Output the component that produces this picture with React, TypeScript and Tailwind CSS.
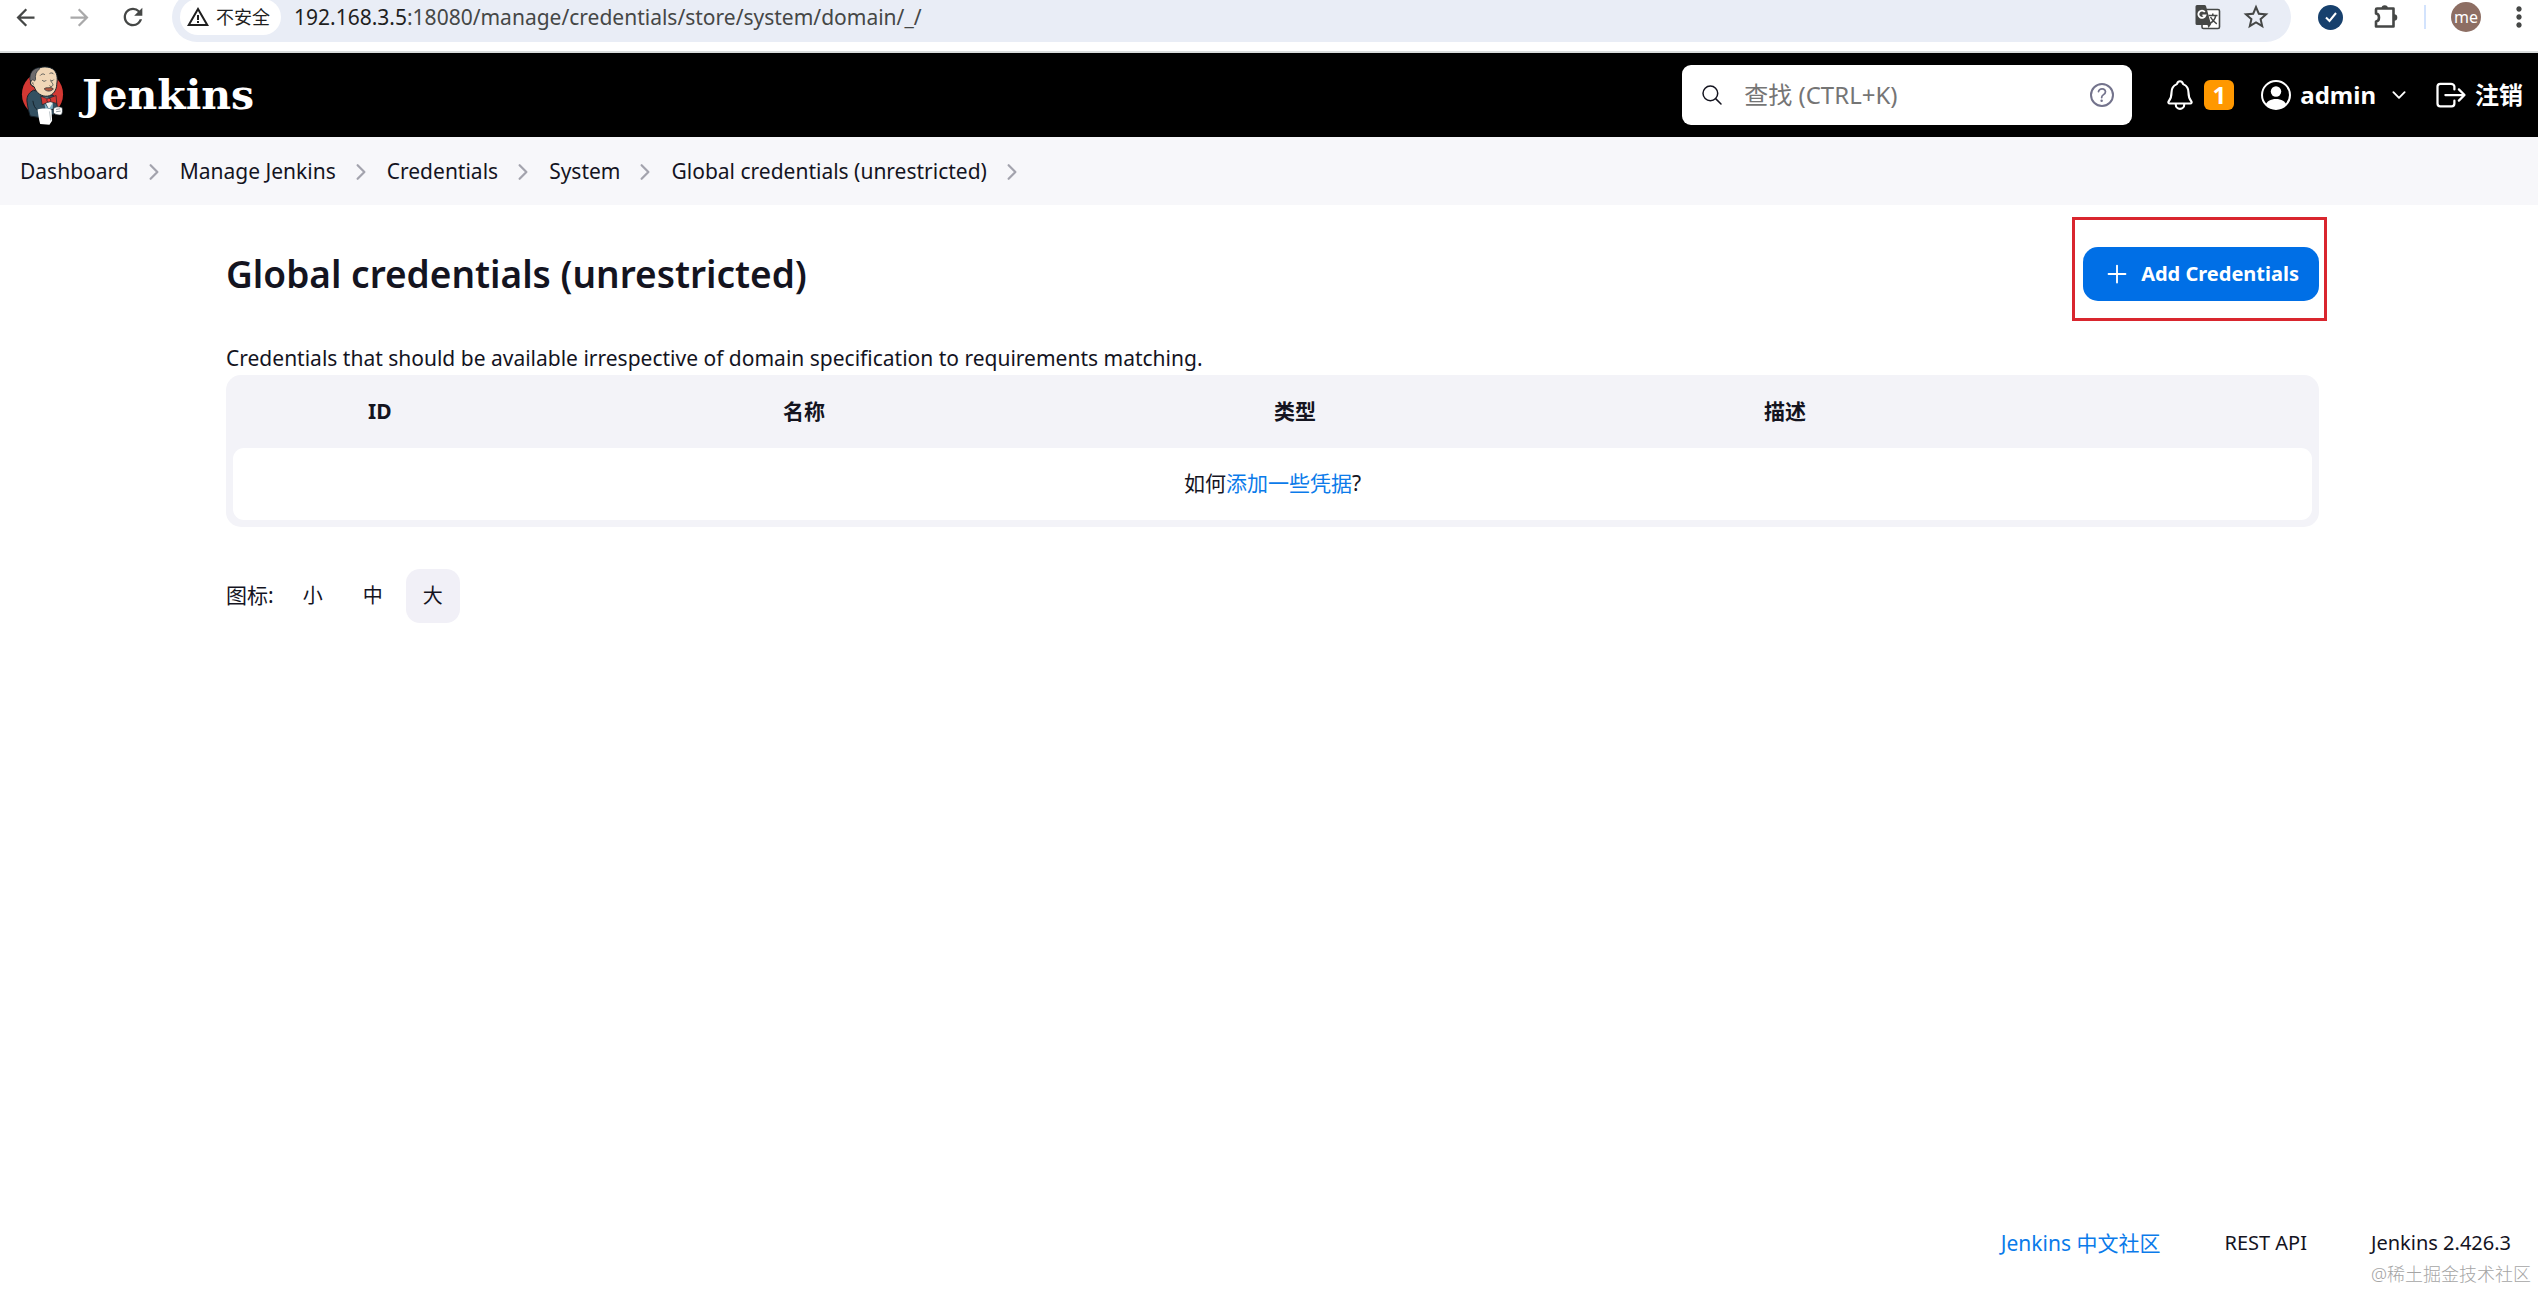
import { useState } from 'react';
import {
  IoAdd,
  IoChevronDown,
  IoChevronForward,
  IoHelpCircleOutline,
  IoLogOutOutline,
  IoNotificationsOutline,
  IoSearchOutline,
} from 'react-icons/io5';
import {
  MdArrowBack,
  MdArrowForward,
  MdMoreVert,
  MdRefresh,
  MdStarBorder,
  MdWarningAmber,
} from 'react-icons/md';

const breadcrumbs = [
  'Dashboard',
  'Manage Jenkins',
  'Credentials',
  'System',
  'Global credentials (unrestricted)',
];

const columns = [
  { label: '', width: 'w-[111px]' },
  { label: 'ID', width: 'w-[415px]' },
  { label: '名称', width: 'w-[491px]' },
  { label: '类型', width: 'w-[490px]' },
  { label: '描述', width: '' },
];

const iconSizes = ['小', '中', '大'];

function JenkinsLogo() {
  return (
    <svg className="w-[45px] h-[61px]" viewBox="60 192 134 184" aria-hidden="true">
      <ellipse cx="127" cy="280" rx="62" ry="66" fill="#d33833" />
      {/* jacket */}
      <path
        d="M100 268 C86 276 80 284 80 300 C82 318 86 334 90 346 L116 350 L162 340 L172 320 C170 304 166 294 160 284 Z"
        fill="#335061"
        stroke="#16222b"
        strokeWidth="3"
      />
      <path d="M98 300 C100 314 104 322 112 328 L160 326" fill="none" stroke="#16222b" strokeWidth="3" />
      {/* shirt */}
      <path d="M128 290 L160 292 L156 318 L146 324 Z" fill="#f0f0ee" />
      <path d="M132 304 L146 326 L158 306 L158 324 L136 326 Z" fill="#81b0c4" />
      {/* head */}
      <path
        d="M100 214 C110 198 140 192 158 204 C172 214 173 232 170 250 C170 266 160 284 142 286 C124 288 108 276 102 258 C92 254 88 246 92 238 Z"
        fill="#f0d6b7"
        stroke="#16222b"
        strokeWidth="3"
      />
      {/* hair */}
      <path
        d="M116 200 C98 202 88 216 89 236 C90 242 94 240 98 236 C102 240 104 242 106 236 C104 222 108 212 118 204 Z"
        fill="#6d6b6d"
        stroke="#16222b"
        strokeWidth="2"
      />
      <path d="M94 240 C88 246 92 258 102 256 M98 244 C96 248 98 250 101 250" fill="none" stroke="#16222b" strokeWidth="2" />
      {/* face */}
      <path
        d="M120 224 C124 218 130 218 134 221 M148 218 C154 214 158 216 161 220 M126 238 C130 242 136 242 138 238 M150 237 C154 241 159 240 161 236 M152 240 C156 248 162 250 156 256 C152 258 150 256 148 254"
        fill="none"
        stroke="#16222b"
        strokeWidth="2"
      />
      <path d="M132 264 C138 258 146 262 150 260 C154 260 158 262 160 264 C154 272 140 274 132 264 Z" fill="#b0563f" stroke="#16222b" strokeWidth="2" />
      {/* bow tie */}
      <path d="M122 286 L142 294 L168 284 L170 308 L148 302 L126 312 Z" fill="#d33833" stroke="#16222b" strokeWidth="2" />
      <circle cx="146" cy="298" r="6" fill="#ef3d3a" stroke="#16222b" strokeWidth="2" />
      {/* towel and glove */}
      <path d="M112 326 C124 322 142 322 154 326 L156 360 L148 372 L120 370 C116 356 114 340 112 326 Z" fill="#ffffff" />
      <path d="M148 332 L152 360" stroke="#9aa5ab" strokeWidth="2" />
      <path d="M160 324 C166 316 178 318 186 320 C188 328 188 336 184 342 C176 344 164 342 160 336 Z" fill="#ffffff" stroke="#16222b" strokeWidth="2" />
      <path d="M168 326 L180 324 M168 333 L182 331" stroke="#5a6b75" strokeWidth="2" />
    </svg>
  );
}

function UserIcon() {
  return (
    <svg className="w-[30px] h-[30px]" viewBox="0 0 30 30" aria-hidden="true">
      <defs>
        <clipPath id="user-ring">
          <circle cx="15" cy="15" r="14" />
        </clipPath>
      </defs>
      <circle cx="15" cy="15" r="14" fill="none" stroke="currentColor" strokeWidth="2" />
      <circle cx="15" cy="11.5" r="5.2" fill="currentColor" />
      <path d="M4 27 C5 21 10 19 15 19 C20 19 25 21 26 27 L26 30 L4 30 Z" fill="currentColor" clipPath="url(#user-ring)" />
    </svg>
  );
}

function TranslateIcon() {
  return (
    <svg className="w-[26px] h-[26px]" viewBox="0 0 26 26" aria-hidden="true">
      <rect x="7" y="5.5" width="17.5" height="19" rx="1.5" fill="#ffffff" stroke="currentColor" strokeWidth="1.6" />
      <path d="M2 1 H9.5 Q10.5 1 11 2 L16 20.5 L13.5 24 L12.5 21 H2 Q0.5 21 0.5 19.5 V2.5 Q0.5 1 2 1 Z" fill="currentColor" />
      {/* round arrow-like mark on the dark page */}
      <path d="M9.8 8 A3.6 3.6 0 1 0 10.4 11.4 H7.4" fill="none" stroke="#ffffff" strokeWidth="1.9" />
      <path d="M13.5 11.5 H22.5 M17.8 9.5 V11.5 M20.8 11.5 C20 15.5 17.5 18 15 19.5 M15.5 13 C17 16 19 18 21.8 19.8" fill="none" stroke="currentColor" strokeWidth="1.5" />
    </svg>
  );
}

function ExtensionIcon() {
  return (
    <svg className="w-[26px] h-[26px]" viewBox="0 0 26 26" aria-hidden="true">
      <path
        d="M4 4.5 H20.5 V22.5 H3 V17.5 C7 17 7 10 3 9.5 V5.5 Q3 4.5 4 4.5 Z"
        fill="none"
        stroke="currentColor"
        strokeWidth="2.6"
        strokeLinejoin="round"
      />
      <path d="M8.5 4.5 a3.2 3.2 0 0 1 6.4 0 Z M21 10.2 a3.3 3.3 0 0 1 0 6.6 Z" fill="currentColor" />
    </svg>
  );
}

function BrowserBar() {
  return (
    <div className="h-[53px] shrink-0 overflow-hidden border-b-2 border-[#dadddd] bg-white text-[#454746]">
      <div className="-mt-2 flex h-[50px] items-center pl-3 pr-[3px]">
        <button aria-label="Back">
          <MdArrowBack className="h-[27px] w-[27px]" />
        </button>
        <button aria-label="Forward" className="ml-[27px] text-[#a9a9aa]">
          <MdArrowForward className="h-[27px] w-[27px]" />
        </button>
        <button aria-label="Reload" className="ml-[26px]">
          <MdRefresh className="h-7 w-7" />
        </button>

        <div className="ml-[25px] flex h-full flex-1 items-center rounded-full bg-[#e9edf6] pl-2 pr-5">
          <button className="flex h-9 items-center gap-[6px] rounded-full bg-white pl-[6px] pr-[11px] text-[18px] text-[#1f1f1f]">
            <MdWarningAmber className="h-6 w-6" />
            不安全
          </button>
          <p className="ml-[13px] flex-1 text-[21px] leading-8">
            <span className="text-[#1f1f1f]">192.168.3.5</span>:18080/manage/credentials/store/system/domain/_/
          </p>
          <button aria-label="Translate">
            <TranslateIcon />
          </button>
          <button aria-label="Bookmark" className="ml-5">
            <MdStarBorder className="h-[30px] w-[30px]" />
          </button>
        </div>

        <button aria-label="Checker" className="ml-[27px] flex h-[25px] w-[25px] items-center justify-center rounded-full bg-[#17406d] text-white">
          <svg className="h-4 w-4" viewBox="0 0 16 16" fill="none" stroke="currentColor" strokeWidth="2" aria-hidden="true">
            <path d="M3 8.5 L6.5 12 L13 4" />
          </svg>
        </button>
        <button aria-label="Extensions" className="ml-[30px]">
          <ExtensionIcon />
        </button>
        <div className="ml-[25px] h-6 w-[2px] bg-[#d3e3fd]" />
        <button className="ml-[25px] flex h-[30px] w-[30px] items-center justify-center rounded-full bg-[#8d6e63] text-base leading-4 text-white">
          me
        </button>
        <button aria-label="Menu" className="ml-[22px]">
          <MdMoreVert className="h-8 w-8" />
        </button>
      </div>
    </div>
  );
}

function Header() {
  return (
    <header className="flex h-[84px] shrink-0 items-center bg-black pl-5 pr-[15px] text-white">
      <a href="#" className="flex items-center gap-[17px]">
        <JenkinsLogo />
        <span className="font-['DejaVu_Serif',serif] text-[41px] font-bold leading-[60px]">Jenkins</span>
      </a>

      <label className="ml-auto flex h-[60px] w-[450px] items-center rounded-[9px] bg-white pl-[18px] pr-[14px] text-[#14141f]">
        <IoSearchOutline className="h-6 w-6" />
        <input
          type="search"
          aria-label="查找"
          placeholder="查找 (CTRL+K)"
          className="ml-5 min-w-0 flex-1 text-2xl outline-none placeholder:text-[#757575]"
        />
        <IoHelpCircleOutline className="h-8 w-8 text-[#73738c]" />
      </label>

      <button aria-label="Notifications" className="ml-[31px] flex items-center gap-[7px]">
        <IoNotificationsOutline className="h-[34px] w-[34px]" />
        <span className="flex h-[30px] w-[30px] items-center justify-center rounded-md bg-[#ff9800] text-2xl font-bold leading-[30px]">
          1
        </span>
      </button>
      <a href="#" className="ml-[27px] flex items-center gap-[9px] text-2xl font-bold">
        <UserIcon />
        admin
        <IoChevronDown className="ml-1 h-5 w-5" />
      </a>
      <a href="#" className="ml-6 flex items-center gap-[6px] text-2xl font-bold">
        <IoLogOutOutline className="h-9 w-9" />
        注销
      </a>
    </header>
  );
}

export default function App() {
  const [iconSize, setIconSize] = useState('大');

  return (
    <div className="relative flex min-h-screen flex-col bg-white font-['Noto_Sans','Noto_Sans_CJK_SC',sans-serif] text-[21px] text-[#14141f]">
      <BrowserBar />
      <Header />

      <nav aria-label="Breadcrumbs" className="h-[68px] shrink-0 bg-[#f7f7fa] pl-5 pt-[2px]">
        <ol className="flex h-full items-center">
          {breadcrumbs.map((item) => (
            <li key={item} className="flex items-center">
              <a href="#">{item}</a>
              <IoChevronForward className="ml-[13px] mr-[14px] h-6 w-6 text-[#a3a3ad]" />
            </li>
          ))}
        </ol>
      </nav>

      <main className="pl-[226px] pr-[219px] pt-[42px]">
        <div className="flex items-center justify-between">
          <h1 className="text-[37px] font-semibold leading-[54px]">Global credentials (unrestricted)</h1>
          <div className="relative">
            <button className="flex h-[54px] items-center gap-[9px] rounded-[15px] bg-[#006fe6] pl-[19px] pr-5 text-xl font-bold text-white">
              <IoAdd className="h-[30px] w-[30px]" />
              Add Credentials
            </button>
            <div className="pointer-events-none absolute -bottom-5 -left-[11px] -right-2 -top-[30px] border-[3px] border-[#d9262e]" />
          </div>
        </div>

        <p className="mt-10 leading-[34px]">
          Credentials that should be available irrespective of domain specification to requirements matching.
        </p>

        <div className="rounded-[15px] bg-[#f3f3f8] px-[7px] pb-[7px]">
          <table className="w-full table-fixed">
            <thead>
              <tr className="h-[73px]">
                {columns.map((col) => (
                  <th key={col.label} className={`px-6 text-left font-bold ${col.width}`}>
                    {col.label}
                  </th>
                ))}
              </tr>
            </thead>
            <tbody>
              <tr className="h-[72px]">
                <td colSpan={5} className="rounded-[11px] bg-white text-center">
                  如何
                  <a href="#" className="text-[#0b7bea]">
                    添加一些凭据
                  </a>
                  ?
                </td>
              </tr>
            </tbody>
          </table>
        </div>

        <div className="mt-[42px] flex items-center gap-[6px]">
          <span className="mr-[6px]">图标:</span>
          {iconSizes.map((size) => (
            <button
              key={size}
              onClick={() => setIconSize(size)}
              className={`h-[54px] w-[54px] rounded-[14px] text-xl ${iconSize === size ? 'bg-[#f1f0f7]' : ''}`}
            >
              {size}
            </button>
          ))}
        </div>
      </main>

      <footer className="mt-auto flex justify-end gap-16 pb-[31px] pr-[27px] text-xl leading-8">
        <a href="#" className="text-[21px] leading-8 text-[#0b7bea]">
          Jenkins 中文社区
        </a>
        <a href="#">REST API</a>
        <a href="#">Jenkins 2.426.3</a>
      </footer>

      <span className="absolute bottom-1 right-[7px] text-[18px] font-light leading-6 text-[#a5a5a5]">@稀土掘金技术社区</span>
    </div>
  );
}
